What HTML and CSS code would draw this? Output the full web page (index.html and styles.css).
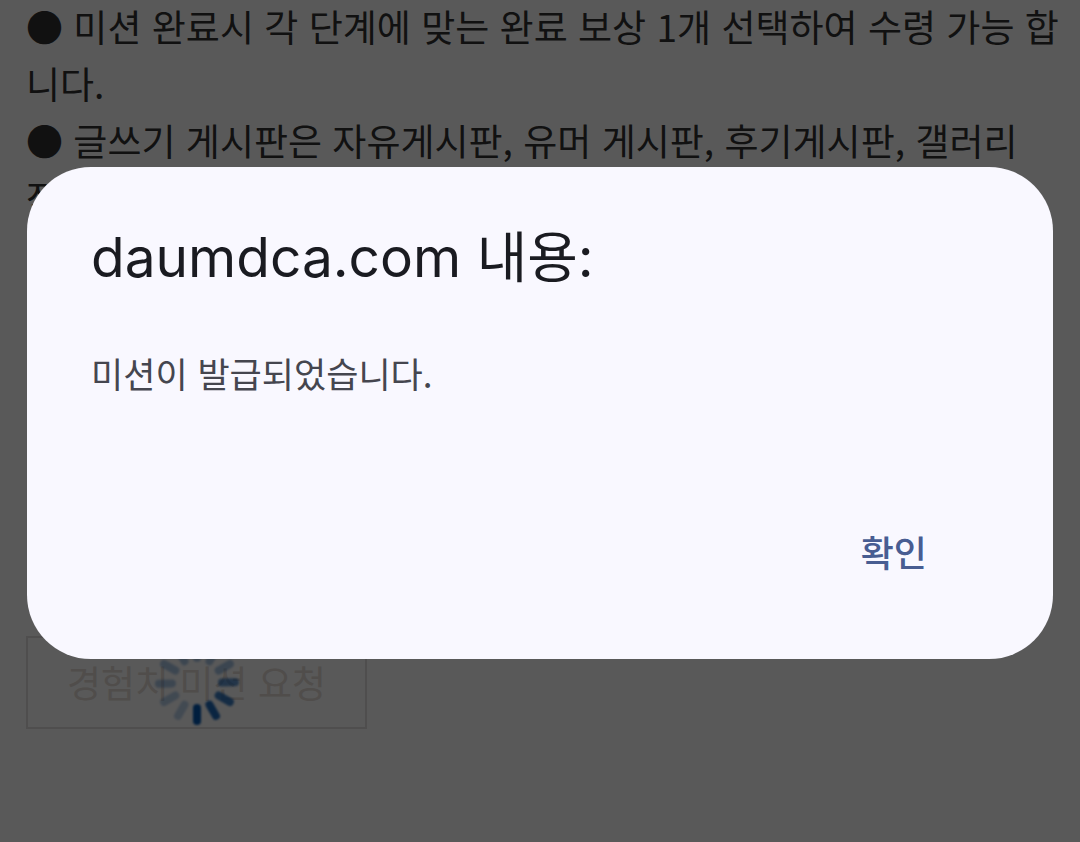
FILE: index.html
```html
<!DOCTYPE html>
<html lang="ko">
    <head>
        <meta charset="utf-8">
        <title>경험치 미션</title>
        <meta name="viewport" content="width=device-width, initial-scale=1.0">
        <link rel="stylesheet" href="styles.css">
    </head>
    <body>
        <main id="mission">
            <div id="rules">
                <p>● 미션 완료시 각 단계에 맞는 완료 보상 1개 선택하여 수령 가능 합니다.</p>
                <p>● 글쓰기 게시판은 자유게시판, 유머 게시판, 후기게시판, 갤러리 작성</p>
            </div>
            <div id="request">
                <button id="requestButton" type="button" disabled>경험치 미션 요청</button>
                <svg id="spinner" viewBox="-44 -44 88 88" aria-hidden="true">
                    <g stroke="#0056b1" stroke-width="8" stroke-linecap="round">
                        <path d="M0 25V38"/>
                        <path d="M0 25V38" transform="rotate(-30)" opacity="0.88"/>
                        <path d="M0 25V38" transform="rotate(-60)" opacity="0.76"/>
                        <path d="M0 25V38" transform="rotate(-91)" opacity="0.6"/>
                        <path d="M0 25V38" transform="rotate(-120)" opacity="0.34"/>
                        <path d="M0 25V38" transform="rotate(-150)" opacity="0.32"/>
                        <path d="M0 25V38" transform="rotate(180)" opacity="0.32"/>
                        <path d="M0 25V38" transform="rotate(150)" opacity="0.32"/>
                        <path d="M0 25V38" transform="rotate(120)" opacity="0.32"/>
                        <path d="M0 25V38" transform="rotate(89)" opacity="0.32"/>
                        <path d="M0 25V38" transform="rotate(60)" opacity="0.28"/>
                        <path d="M0 25V38" transform="rotate(30)" opacity="0.26"/>
                    </g>
                </svg>
            </div>
        </main>
        <div id="overlay">
            <div id="dialog" role="alertdialog" aria-labelledby="dialogTitle" aria-describedby="dialogMessage">
                <h1 id="dialogTitle">daumdca.com 내용:</h1>
                <p id="dialogMessage">미션이 발급되었습니다.</p>
                <button id="confirmButton" type="button">확인</button>
            </div>
        </div>
    </body>
</html>
```
FILE: styles.css
```css
body {
    margin: 0;
    background-color: white;
    font-family: "Noto Sans CJK KR", sans-serif;
}

p, h1 {
    margin: 0;
}

#mission {
    display: flow-root;
    padding: 0 20px 0 26px;
}

#rules {
    min-height: 638px;
    margin-top: -2px;
    color: #333;
    font-size: 37px;
    line-height: 57px;
    word-break: break-all;
}

#request {
    display: inline-grid;
    place-items: center;
}

#requestButton, #spinner {
    grid-area: 1/1;
}

#requestButton {
    padding: 16px 39px;
    border: 2px solid #e2dede;
    background-color: transparent;
    color: #e4dcd6;
    font-family: inherit;
    font-size: 37px;
    line-height: 57px;
}

#spinner {
    width: 88px;
    height: 88px;
    filter: blur(1px);
}

#overlay {
    position: fixed;
    inset: 0;
    display: flex;
    align-items: center;
    padding: 0 27px 16px;
    background-color: rgba(0, 0, 0, 0.65);
}

#dialog {
    flex: 1;
    display: flex;
    flex-direction: column;
    padding: 56px 64px;
    border-radius: 64px;
    background-color: #f9f8ff;
}

#dialogTitle {
    color: #1a1b21;
    font-family: Inter, "Noto Sans CJK KR", sans-serif;
    font-size: 55px;
    font-weight: 400;
    line-height: 68px;
}

#dialogMessage {
    min-height: 128px;
    margin-top: 56px;
    color: #45464f;
    font-size: 35px;
    line-height: 52px;
}

#confirmButton {
    align-self: flex-end;
    margin-top: 24px;
    padding: 26px 62px;
    border: none;
    background-color: transparent;
    color: #485d92;
    font-family: inherit;
    font-size: 36px;
    font-weight: 500;
    line-height: 52px;
    cursor: pointer;
}
```
